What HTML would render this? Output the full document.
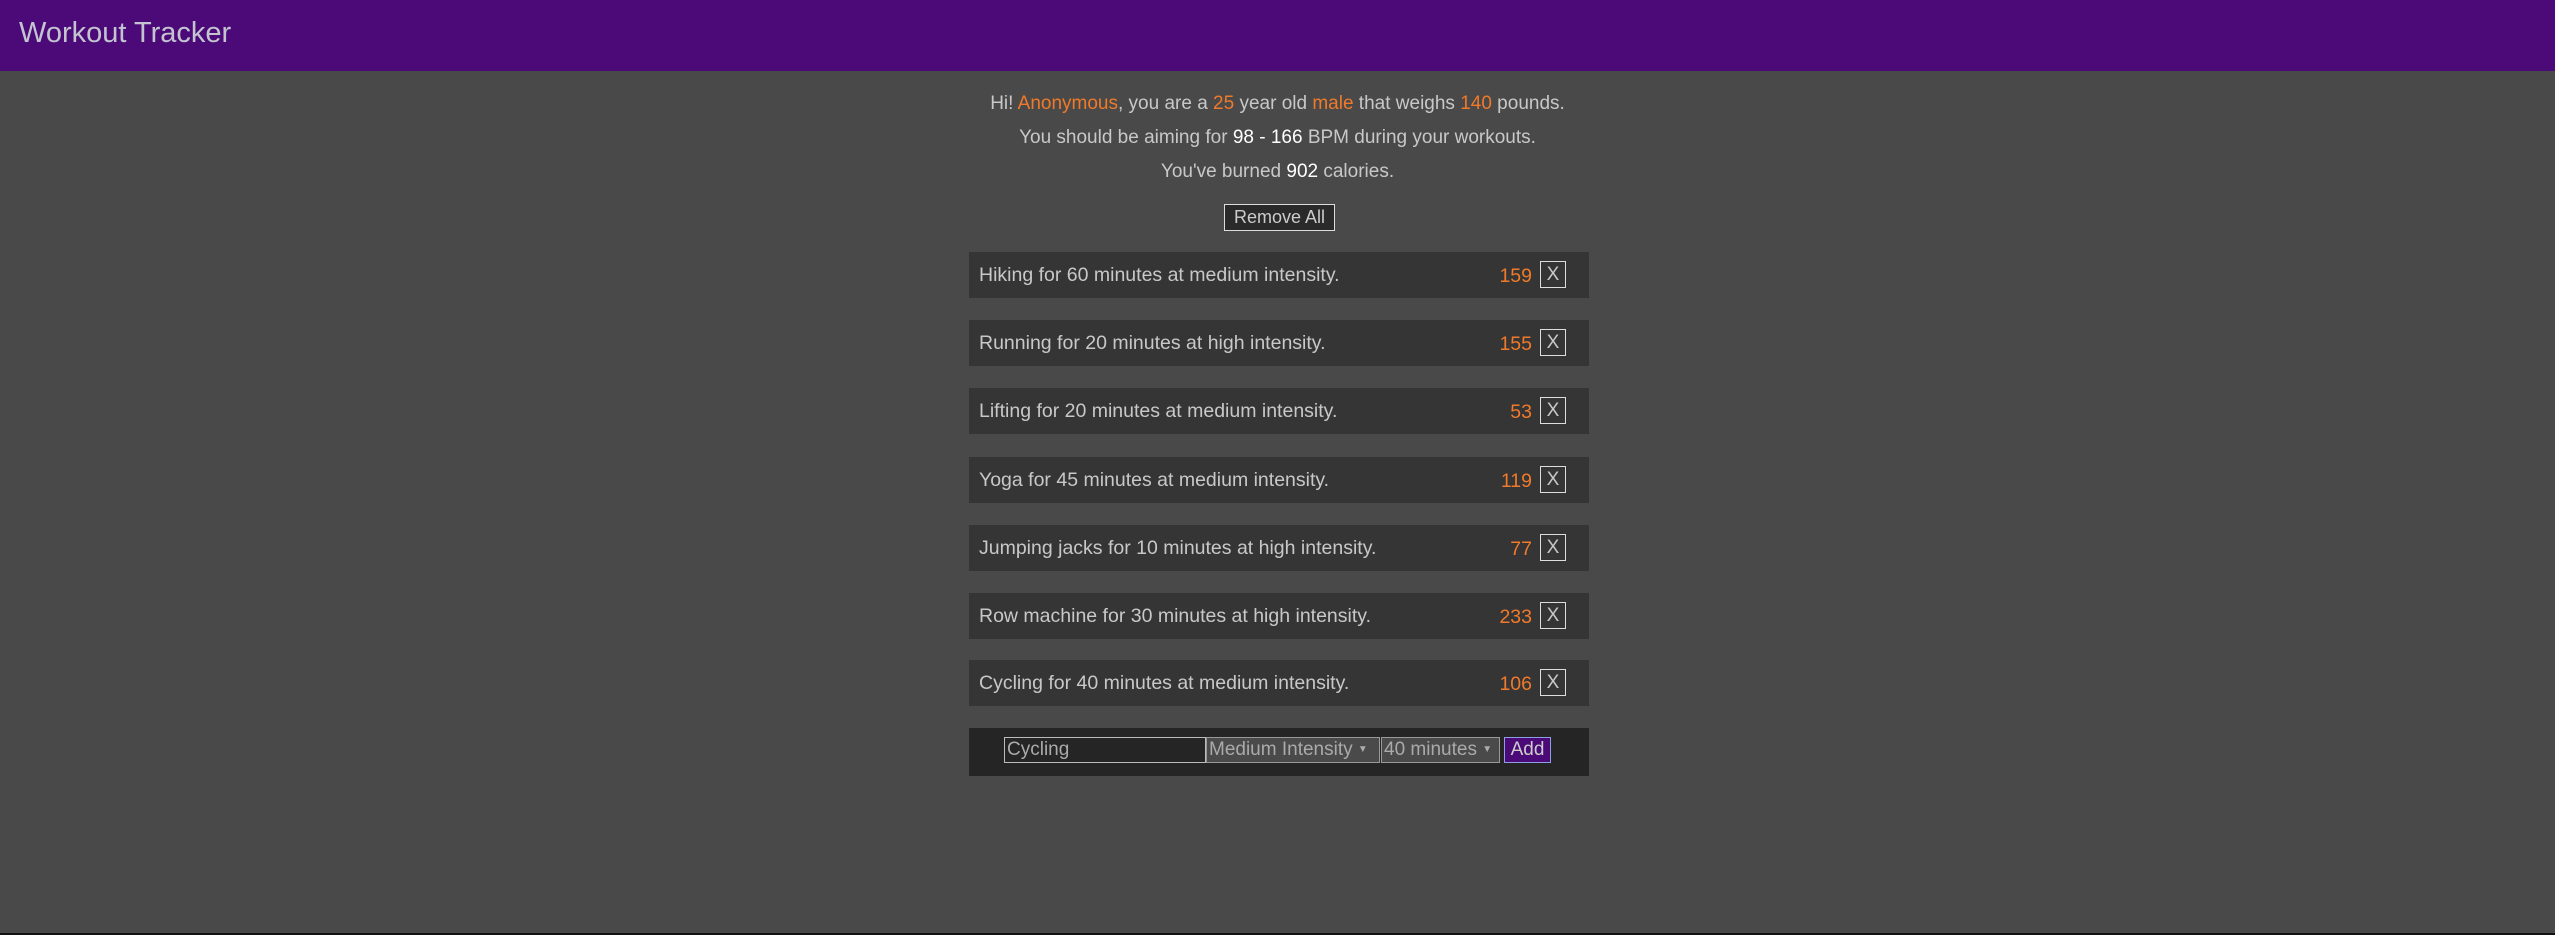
<!DOCTYPE html>
<html><head><style>
body{margin:0;width:2555px;height:935px;background:#494949;font-family:"Liberation Sans",sans-serif;color:#c8c8c8;position:relative;overflow:hidden}
.hdr{position:absolute;left:0;top:0;width:2555px;height:71px;background:#4b0a78}
.hdr span{position:absolute;left:19px;top:17px;font-size:29px;color:#c4c4d0;font-weight:300}
.line{position:absolute;left:0;width:2555px;text-align:center;font-size:19px}
.o{color:#f07a2a}.w{color:#fff}
.rm{position:absolute;left:1224px;top:204px;width:109px;height:25px;border:1px solid #ddd;background:#2a2a2a;font-size:18px;text-align:center;line-height:25px;color:#ccc}
.row{position:absolute;left:969px;width:620px;height:46px;background:#353535;font-size:19.5px}
.row .t{position:absolute;left:10px;top:12px}
.row .n{position:absolute;right:57px;top:13px;color:#f07a2a}
.row .x{position:absolute;left:571px;top:9px;width:24px;height:25px;border:1px solid #ddd;text-align:center;line-height:25px;font-size:19px}
.form{position:absolute;left:969px;top:728px;width:620px;height:48px;background:#252525}
.f{position:absolute;top:9px;height:26px;box-sizing:border-box;border:1px solid #999;font-size:19px;line-height:24px;color:#aaa;padding-left:2px}
</style></head><body>
<div class="hdr"><span>Workout Tracker</span></div>
<div class="line" style="top:93px">Hi! <span class="o">Anonymous</span>, you are a <span class="o">25</span> year old <span class="o">male</span> that weighs <span class="o">140</span> pounds.</div>
<div class="line" style="top:127px">You should be aiming for <span class="w">98 - 166</span> BPM during your workouts.</div>
<div class="line" style="top:161px">You've burned <span class="w">902</span> calories.</div>
<div class="rm">Remove All</div>
<div class="row" style="top:252px"><span class="t">Hiking for 60 minutes at medium intensity.</span><span class="n">159</span><span class="x">X</span></div>
<div class="row" style="top:320px"><span class="t">Running for 20 minutes at high intensity.</span><span class="n">155</span><span class="x">X</span></div>
<div class="row" style="top:388px"><span class="t">Lifting for 20 minutes at medium intensity.</span><span class="n">53</span><span class="x">X</span></div>
<div class="row" style="top:457px"><span class="t">Yoga for 45 minutes at medium intensity.</span><span class="n">119</span><span class="x">X</span></div>
<div class="row" style="top:525px"><span class="t">Jumping jacks for 10 minutes at high intensity.</span><span class="n">77</span><span class="x">X</span></div>
<div class="row" style="top:593px"><span class="t">Row machine for 30 minutes at high intensity.</span><span class="n">233</span><span class="x">X</span></div>
<div class="row" style="top:660px"><span class="t">Cycling for 40 minutes at medium intensity.</span><span class="n">106</span><span class="x">X</span></div>
<div class="form">
<div class="f" style="left:35px;width:202px;background:#252525;border-color:#bbb">Cycling</div>
<div class="f" style="left:237px;width:174px;background:#4a4a4a">Medium Intensity <span style="font-size:10px;vertical-align:top">▼</span></div>
<div class="f" style="left:412px;width:119px;background:#4a4a4a">40 minutes <span style="font-size:10px;vertical-align:top">▼</span></div>
<div class="f" style="left:535px;width:47px;background:#4b0a78;border-color:#8aa0e0;color:#ccc;text-align:center;padding:0">Add</div>
</div>
<div style="position:absolute;left:0;top:933px;width:2555px;height:2px;background:#111"></div>
</body></html>
